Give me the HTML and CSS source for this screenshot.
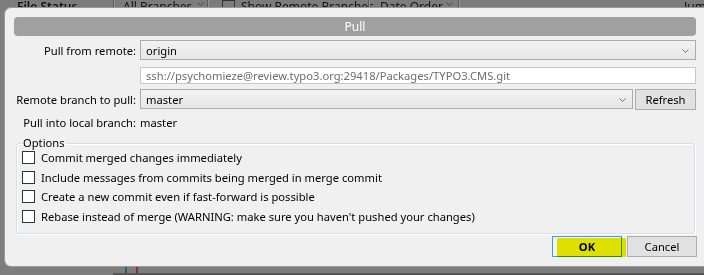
FILE: index.html
```html
<!DOCTYPE html>
<html>
<head>
<meta charset="utf-8">
<link rel="stylesheet" href="styles.css">
</head>
<body>
<div class="app">
  <div class="toolbar">
    <span class="tb-item tb-status">File Status</span>
    <span class="tb-sep"></span>
    <span class="tb-item tb-branches">All Branches</span>
    <svg class="tb-chev" width="12" height="8" viewBox="0 0 12 8"><path d="M2.5 2.5 L5.5 5.5 L8.5 2.5" fill="none" stroke="#444" stroke-width="1"/></svg>
    <span class="tb-sep"></span>
    <span class="tb-check"></span>
    <span class="tb-item tb-remote">Show Remote Branches</span>
    <span class="tb-sep"></span>
    <span class="tb-item tb-date">Date Order</span>
    <svg class="tb-chev" width="14" height="8" viewBox="0 0 14 8"><path d="M2.5 2.5 L5.5 5.5 L8.5 2.5" fill="none" stroke="#444" stroke-width="1"/></svg>
    <span class="tb-sep"></span>
    <span class="tb-spacer"></span>
    <span class="tb-item tb-jump">Jum</span>
  </div>
  <div class="app-main"></div>
  <div class="app-bottom">
    <span class="mark mark-blue"></span>
    <span class="mark mark-purple"></span>
  </div>
</div>

<div class="dialog">
  <div class="dialog-inner">
    <div class="titlebar">Pull</div>

    <div class="form">
      <label class="lbl">Pull from remote:</label>
      <div class="combo">
        <span class="combo-text">origin</span>
        <svg class="chev" width="7" height="4" viewBox="0 0 7 4"><path d="M0.5 0.5 L3.5 3.5 L6.5 0.5" fill="none" stroke="#707070" stroke-width="1"/></svg>
      </div>

      <span class="lbl"></span>
      <div class="input-url">ssh://psychomieze@review.typo3.org:29418/Packages/TYPO3.CMS.git</div>

      <label class="lbl lbl-branch">Remote branch to pull:</label>
      <div class="branch-row">
        <div class="combo combo-branch">
          <span class="combo-text">master</span>
          <svg class="chev" width="7" height="4" viewBox="0 0 7 4"><path d="M0.5 0.5 L3.5 3.5 L6.5 0.5" fill="none" stroke="#707070" stroke-width="1"/></svg>
        </div>
        <button class="btn btn-refresh">Refresh</button>
      </div>

      <label class="lbl lbl-local">Pull into local branch:</label>
      <span class="value-local">master</span>
    </div>

    <fieldset class="options">
      <legend class="options-legend">Options</legend>
      <label class="opt"><span class="cb"></span>Commit merged changes immediately</label>
      <label class="opt"><span class="cb"></span>Include messages from commits being merged in merge commit</label>
      <label class="opt"><span class="cb"></span>Create a new commit even if fast-forward is possible</label>
      <label class="opt"><span class="cb"></span>Rebase instead of merge (WARNING: make sure you haven't pushed your changes)</label>
    </fieldset>

    <div class="actions">
      <div class="ok-wrap">
        <button class="btn btn-ok">OK</button>
        <span class="highlight"></span>
      </div>
      <button class="btn btn-cancel">Cancel</button>
    </div>
  </div>
</div>
</body>
</html>
```

FILE: styles.css
```css
* { box-sizing: border-box; }

html, body {
  margin: 0;
  padding: 0;
  width: 704px;
  height: 275px;
  overflow: hidden;
}

body {
  background: #7e7e7e;
  font-family: "Noto Sans", "Open Sans", sans-serif;
  font-size: 11.2px;
  color: #000;
  position: relative;
}

/* ---------- background application ---------- */
.app {
  display: flex;
  flex-direction: column;
  height: 275px;
}

.toolbar {
  height: 8px;
  overflow: hidden;
  display: flex;
  align-items: flex-end;
  background: #7c7c7c;
  padding-left: 17px;
  color: #111;
  font-family: "Noto Sans", sans-serif;
  font-size: 12px;
  line-height: 14px;
}

.tb-item {
  white-space: nowrap;
  flex: none;
  margin-bottom: -6px;
}

.tb-status { font-weight: 600; width: 96px; }
.tb-sep {
  flex: none;
  width: 2px;
  height: 8px;
  border-left: 1px solid #5a5a5a;
  border-right: 1px solid #959595;
}
.tb-branches { margin-left: 8px; width: 72px; }
.tb-chev { flex: none; display: block; }
.tb-check {
  flex: none;
  width: 13px;
  height: 14px;
  margin-left: 13px;
  margin-right: 6px;
  border: 1px solid #333;
  margin-bottom: -6px;
}
.tb-remote { width: 127px; }
.tb-date { margin-left: 10px; width: 64px; }
.tb-spacer { flex: 1; }
.tb-jump { width: 20px; }

.app-main { flex: 1; }

.app-bottom {
  height: 9px;
  margin-left: 113px;
  border-top: 1px solid #5f5f5f;
  border-bottom: 2px solid #555;
  display: flex;
  gap: 9px;
  padding-left: 12px;
}

.mark { width: 2px; height: 6px; }
.mark-blue { background: #2a5a7a; }
.mark-purple { background: #7a2a70; }

/* ---------- dialog ---------- */
.dialog {
  position: absolute;
  left: 5px;
  top: 8px;
  width: 720px;
  height: 258px;
  background: #f0f0f0;
  border-radius: 6px 0 0 6px;
  box-shadow: 0 0 0 1px #9a9a9a;
  padding: 9px 0 0 9px;
}

.dialog-inner {
  width: 682px;
  display: flex;
  flex-direction: column;
}

.titlebar {
  height: 19px;
  background: #a0a0a0;
  border-radius: 4px;
  color: #fff;
  text-align: center;
  line-height: 19px;
  font-size: 12px;
}

.form {
  display: grid;
  grid-template-columns: 122px 1fr;
  column-gap: 4px;
  margin-top: 4px;
  align-items: center;
}

.lbl {
  text-align: right;
  white-space: nowrap;
}

.combo {
  height: 20px;
  border: 1px solid #acacac;
  background: linear-gradient(#f2f2f2, #e6e6e6);
  display: flex;
  align-items: center;
  padding: 0 6px 0 5px;
}

.combo-text { flex: 1; }
.chev { display: block; margin-top: 1px; }

.input-url {
  margin-top: 7px;
  height: 17px;
  border: 1px solid #c8c8c8;
  background: #fff;
  color: #6d6d6d;
  line-height: 15px;
  padding-left: 5px;
  white-space: nowrap;
  overflow: hidden;
}

.lbl-branch { margin-top: 5px; }

.branch-row {
  margin-top: 5px;
  display: flex;
  gap: 2px;
  align-items: flex-start;
}

.combo-branch { width: 493px; }

.btn {
  font-family: inherit;
  font-size: 11.2px;
  color: #000;
  background: #e1e1e1;
  border: 1px solid #adadad;
  padding: 0;
  margin: 0;
}

.btn-refresh {
  width: 61px;
  height: 21px;
  line-height: 17px;
}

.lbl-local { margin-top: 3px; line-height: 20px; }
.value-local { margin-top: 3px; line-height: 20px; }

/* ---------- options group ---------- */
.options {
  margin: 3px 1px 0 2px;
  padding: 0 0 0 5px;
  border: 1px solid #d5dfe5;
  box-shadow: inset 1px 1px 0 #fff, 1px 1px 0 #fff;
  border-radius: 3px;
  height: 98px;
  min-width: 0;
  display: flex;
  flex-direction: column;
}

.options-legend {
  padding: 0 2px 0 1px;
  line-height: 14px;
}

.opt {
  display: flex;
  align-items: center;
  height: 19.6px;
  white-space: nowrap;
}

.opt:first-of-type { margin-top: -2px; }

.cb {
  width: 13px;
  height: 13px;
  border: 1px solid #333;
  background: #fff;
  margin-right: 6px;
  flex: none;
}

/* ---------- bottom buttons ---------- */
.actions {
  display: flex;
  justify-content: flex-end;
  gap: 5px;
  margin-top: 2px;
  margin-right: -1px;
}

.ok-wrap {
  position: relative;
  width: 70px;
  height: 21px;
}

.btn-ok {
  width: 70px;
  height: 21px;
  border: 1px solid #3c9bf0;
  font-weight: 700;
  background: #f3f3f3;
}

.highlight {
  position: absolute;
  left: 5px;
  top: 2px;
  width: 69px;
  height: 19px;
  background: #eaea00;
  mix-blend-mode: multiply;
  border-radius: 1px;
}

.btn-cancel {
  width: 70px;
  height: 21px;
}
```
